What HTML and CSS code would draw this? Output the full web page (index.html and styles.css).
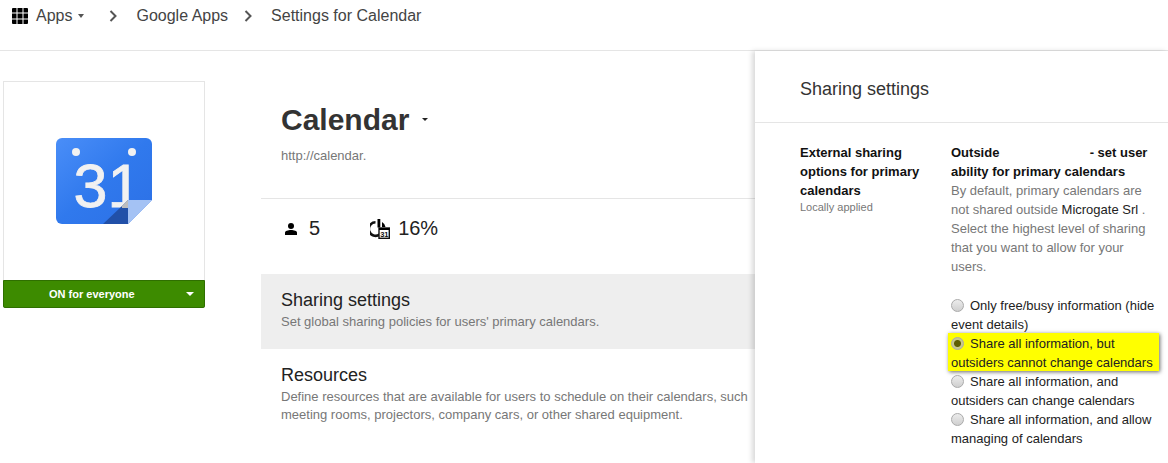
FILE: index.html
```html
<!DOCTYPE html>
<html lang="en">
<head>
  <meta charset="UTF-8">
  <title>Settings for Calendar</title>
  <link rel="stylesheet" href="styles.css">
</head>
<body>
  <header class="topbar">
    <svg class="apps-icon" width="16" height="16" viewBox="0 0 16 16">
      <path d="M0 1a1 1 0 0 1 1-1h3.500v4.500H0zM5.500 0h5v4.500h-5zM11.500 0H15a1 1 0 0 1 1 1v3.500h-4.500zM0 5.500h4.500v5H0zM5.500 5.500h5v5h-5zM11.500 5.500H16v5h-4.500zM0 11.500h4.500V16H1a1 1 0 0 1-1-1zM5.500 11.500h5V16h-5zM11.500 11.500H16V15a1 1 0 0 1-1 1h-3.500z"/>
    </svg>
    <span class="crumb crumb-apps">Apps</span>
    <span class="caret caret-grey"></span>
    <svg class="chevron chevron-first" width="9" height="12" viewBox="0 0 9 12"><path d="M1.500 1l5 5-5 5" fill="none" stroke="#555" stroke-width="2"/></svg>
    <span class="crumb">Google Apps</span>
    <svg class="chevron" width="9" height="12" viewBox="0 0 9 12"><path d="M1.500 1l5 5-5 5" fill="none" stroke="#555" stroke-width="2"/></svg>
    <span class="crumb">Settings for Calendar</span>
  </header>

  <div class="page">
    <aside class="sidebar">
      <div class="app-card">
        <div class="app-logo">
          <svg width="96" height="86" viewBox="0 0 96 86">
            <defs>
              <linearGradient id="logoBlue" x1="0" y1="0" x2="1" y2="1">
                <stop offset="0" stop-color="#4a8ef8"/>
                <stop offset="0.5" stop-color="#3079ed"/>
                <stop offset="1" stop-color="#2c70e6"/>
              </linearGradient>
            </defs>
            <path d="M6 0h84a6 6 0 0 1 6 6v56L72 86H6a6 6 0 0 1-6-6V6a6 6 0 0 1 6-6z" fill="url(#logoBlue)"/>
            <circle cx="20" cy="14" r="4" fill="#f1f1f1"/>
            <circle cx="76" cy="14" r="4" fill="#f1f1f1"/>
            <text class="logo-date" x="17.500" y="69">31</text>
            <path d="M47 86l19-18 6-6v24z" fill="#2150a8"/>
            <path d="M66 70v-2l6-6v8z" fill="#bdbdbd"/>
            <path d="M72 62h24L72 86z" fill="#a4c2f4"/>
          </svg>
        </div>
        <div class="app-status">
          <span class="status-label">ON for everyone</span>
          <span class="caret caret-white"></span>
        </div>
      </div>
    </aside>

    <main class="content">
      <section class="app-head">
        <h1 class="app-title">Calendar <span class="caret caret-dark"></span></h1>
        <p class="app-url">http://calendar.</p>
      </section>
      <section class="stats">
        <div class="stat stat-users">
          <svg width="14" height="12" viewBox="0 0 14 12"><circle cx="7" cy="3" r="3"/><path d="M1 12V9.500C1 8 4 7 7 7s6 1 6 2.500V12z"/></svg>
          <span>5</span>
        </div>
        <div class="stat">
          <svg width="20" height="20" viewBox="0 0 20 20">
            <path d="M5.500 3.200a6.800 6.800 0 1 0 4 12.400" fill="none" stroke="#111" stroke-width="2.600"/>
            <path d="M7.500 0h2.800v8.500H7.500z"/>
            <path d="M12 3a7 7 0 0 1 3.500 5H12z"/>
            <rect x="9" y="9" width="10.300" height="10.300" fill="#fff" stroke="#111" stroke-width="1.400"/>
            <rect x="9" y="9" width="10.300" height="2"/>
            <text class="stat-date" x="10.200" y="18">31</text>
          </svg>
          <span>16%</span>
        </div>
      </section>
      <nav class="menu">
        <a class="menu-item menu-item-active">
          <span class="menu-title">Sharing settings</span>
          <span class="menu-desc">Set global sharing policies for users' primary calendars.</span>
        </a>
        <a class="menu-item">
          <span class="menu-title">Resources</span>
          <span class="menu-desc">Define resources that are available for users to schedule on their calendars, such<br>meeting rooms, projectors, company cars, or other shared equipment.</span>
        </a>
        <a class="menu-item">
          <span class="menu-title">General settings</span>
        </a>
      </nav>
    </main>

    <section class="panel">
      <h2 class="panel-title">Sharing settings</h2>
      <div class="panel-body">
        <div class="setting-name">
          <strong>External sharing options for primary calendars</strong>
          <small>Locally applied</small>
        </div>
        <div class="setting-value">
          <strong class="setting-head">Outside <span class="redacted"></span> - set user ability for primary calendars</strong>
          <p class="setting-help">By default, primary calendars are not shared outside <span class="org">Microgate Srl</span> . Select the highest level of sharing that you want to allow for your users.</p>
          <div class="options">
            <div class="option"><span class="radio"></span>Only free/busy information (hide event details)</div>
            <div class="option option-marked"><span class="radio radio-on"></span>Share all information, but outsiders cannot change calendars</div>
            <div class="option"><span class="radio"></span>Share all information, and outsiders can change calendars</div>
            <div class="option"><span class="radio"></span>Share all information, and allow managing of calendars</div>
          </div>
        </div>
      </div>
    </section>
  </div>
</body>
</html>
```

FILE: styles.css
```css
html, body {
  height: 100%;
}

body {
  margin: 0;
  overflow: hidden;
  background: #fff;
  color: #333;
  font-family: "Liberation Sans", Arial, sans-serif;
}

.topbar {
  display: flex;
  align-items: center;
  height: 51px;
  padding: 0 0 18px 12px;
  box-sizing: border-box;
  border-bottom: 1px solid #e5e5e5;
}

.crumb {
  font-size: 16px;
  color: #444;
}

.crumb-apps {
  margin-left: 8px;
}

.chevron {
  margin: 0 18px 0 16px;
}

.chevron-first {
  margin-left: 25px;
}

.caret {
  display: inline-block;
  width: 0;
  height: 0;
  border-left: 4px solid transparent;
  border-right: 4px solid transparent;
  border-top: 4px solid #333;
}

.caret-grey {
  margin-left: 6px;
  border-left-width: 3.5px;
  border-right-width: 3.5px;
  border-top-color: #555;
}

.caret-white {
  border-top-color: #fff;
}

.caret-dark {
  margin-left: 4px;
  vertical-align: 9px;
  border-left-width: 3.5px;
  border-right-width: 3.5px;
  border-top-width: 3.5px;
  border-top-color: #222;
}

.page {
  display: flex;
  height: 412px;
}

.sidebar {
  flex: 0 0 261px;
  box-sizing: border-box;
  padding: 30px 0 0 3px;
}

.app-card {
  width: 202px;
  box-sizing: border-box;
  border: 1px solid #e5e5e5;
  border-bottom: 0;
}

.app-logo {
  display: flex;
  justify-content: center;
  height: 198px;
  padding-top: 56px;
  box-sizing: border-box;
}

.logo-date {
  font-size: 61px;
  fill: #f1f1f1;
  stroke: #f1f1f1;
  stroke-width: 0.8px;
}

.stat-date {
  font-size: 7.500px;
  font-weight: bold;
  fill: #111;
}

.app-status {
  display: flex;
  align-items: center;
  justify-content: space-between;
  height: 28px;
  margin: 0 -1px;
  padding: 0 10px 0 45px;
  border: 1px solid #2f6f00;
  border-radius: 0 0 2px 2px;
  box-sizing: border-box;
  background: #3d8b00;
  color: #fff;
  font-size: 11px;
  font-weight: bold;
}

.content {
  flex: 0 0 494px;
  overflow: hidden;
  box-sizing: border-box;
}

.app-head {
  height: 148px;
  padding: 52px 0 0 20px;
  box-sizing: border-box;
  border-bottom: 1px solid #e5e5e5;
}

.app-title {
  margin: 0;
  font-size: 30px;
  line-height: 34px;
  color: #333;
}

.app-url {
  margin: 11px 0 0;
  font-size: 13px;
  color: #777;
}

.stats {
  display: flex;
  height: 75px;
  padding: 0 0 16px 23px;
  box-sizing: border-box;
  align-items: center;
  gap: 50px;
}

.stat {
  display: flex;
  align-items: center;
  gap: 11px;
  font-size: 20px;
  color: #222;
}

.stat span {
  margin-left: -3px;
}

.stat-users {
  gap: 14px;
}

.menu-item {
  display: block;
  padding: 16px 20px 0;
  height: 75px;
  box-sizing: border-box;
  white-space: nowrap;
}

.menu-item-active {
  background: #eee;
}

.menu-item + .menu-item {
  height: 110px;
}

.menu-title {
  display: block;
  font-size: 18px;
  line-height: 21px;
  color: #222;
}

.menu-desc {
  display: block;
  margin-top: 2px;
  font-size: 13px;
  line-height: 18px;
  color: #777;
}

.panel {
  flex: 1;
  min-width: 0;
  box-shadow: -3px 0 5px rgba(0, 0, 0, 0.15);
  background: #fff;
  z-index: 1;
}

.panel-title {
  margin: 0;
  height: 72px;
  padding: 27px 0 0 45px;
  box-sizing: border-box;
  border-bottom: 1px solid #e5e5e5;
  font-size: 18px;
  font-weight: normal;
  line-height: 22px;
  color: #333;
}

.panel-body {
  display: flex;
  padding: 20px 9px 0 45px;
  font-size: 13px;
  line-height: 19px;
  color: #222;
}

.setting-name {
  flex: 0 0 151px;
  box-sizing: border-box;
  padding-right: 20px;
}

.setting-name strong {
  display: block;
  color: #111;
}

.setting-name small {
  display: block;
  font-size: 11px;
  line-height: 14px;
  color: #777;
}

.setting-value {
  flex: 1;
  min-width: 0;
}

.setting-head {
  display: block;
  color: #111;
}

.redacted {
  display: inline-block;
  width: 83px;
}

.setting-help {
  margin: 0 0 20px;
  color: #777;
}

.org {
  color: #222;
}

.radio {
  display: inline-block;
  width: 11px;
  height: 11px;
  margin-right: 6px;
  vertical-align: -2px;
  border: 1px solid #aaa;
  border-radius: 50%;
  background: linear-gradient(#ececec, #cfcfcf);
}

.radio-on {
  background: radial-gradient(circle, #5f5f00 0, #5f5f00 3px, #c9c98a 4px);
}

.option-marked {
  position: relative;
}

/* highlight sits a pixel above the text lines */
.option-marked::before {
  content: "";
  position: absolute;
  top: -1px;
  right: 0;
  bottom: 1px;
  left: -3px;
  z-index: -1;
  background: #ffff00;
  box-shadow: 1px 1px 4px rgba(0, 0, 0, 0.6);
}
```
